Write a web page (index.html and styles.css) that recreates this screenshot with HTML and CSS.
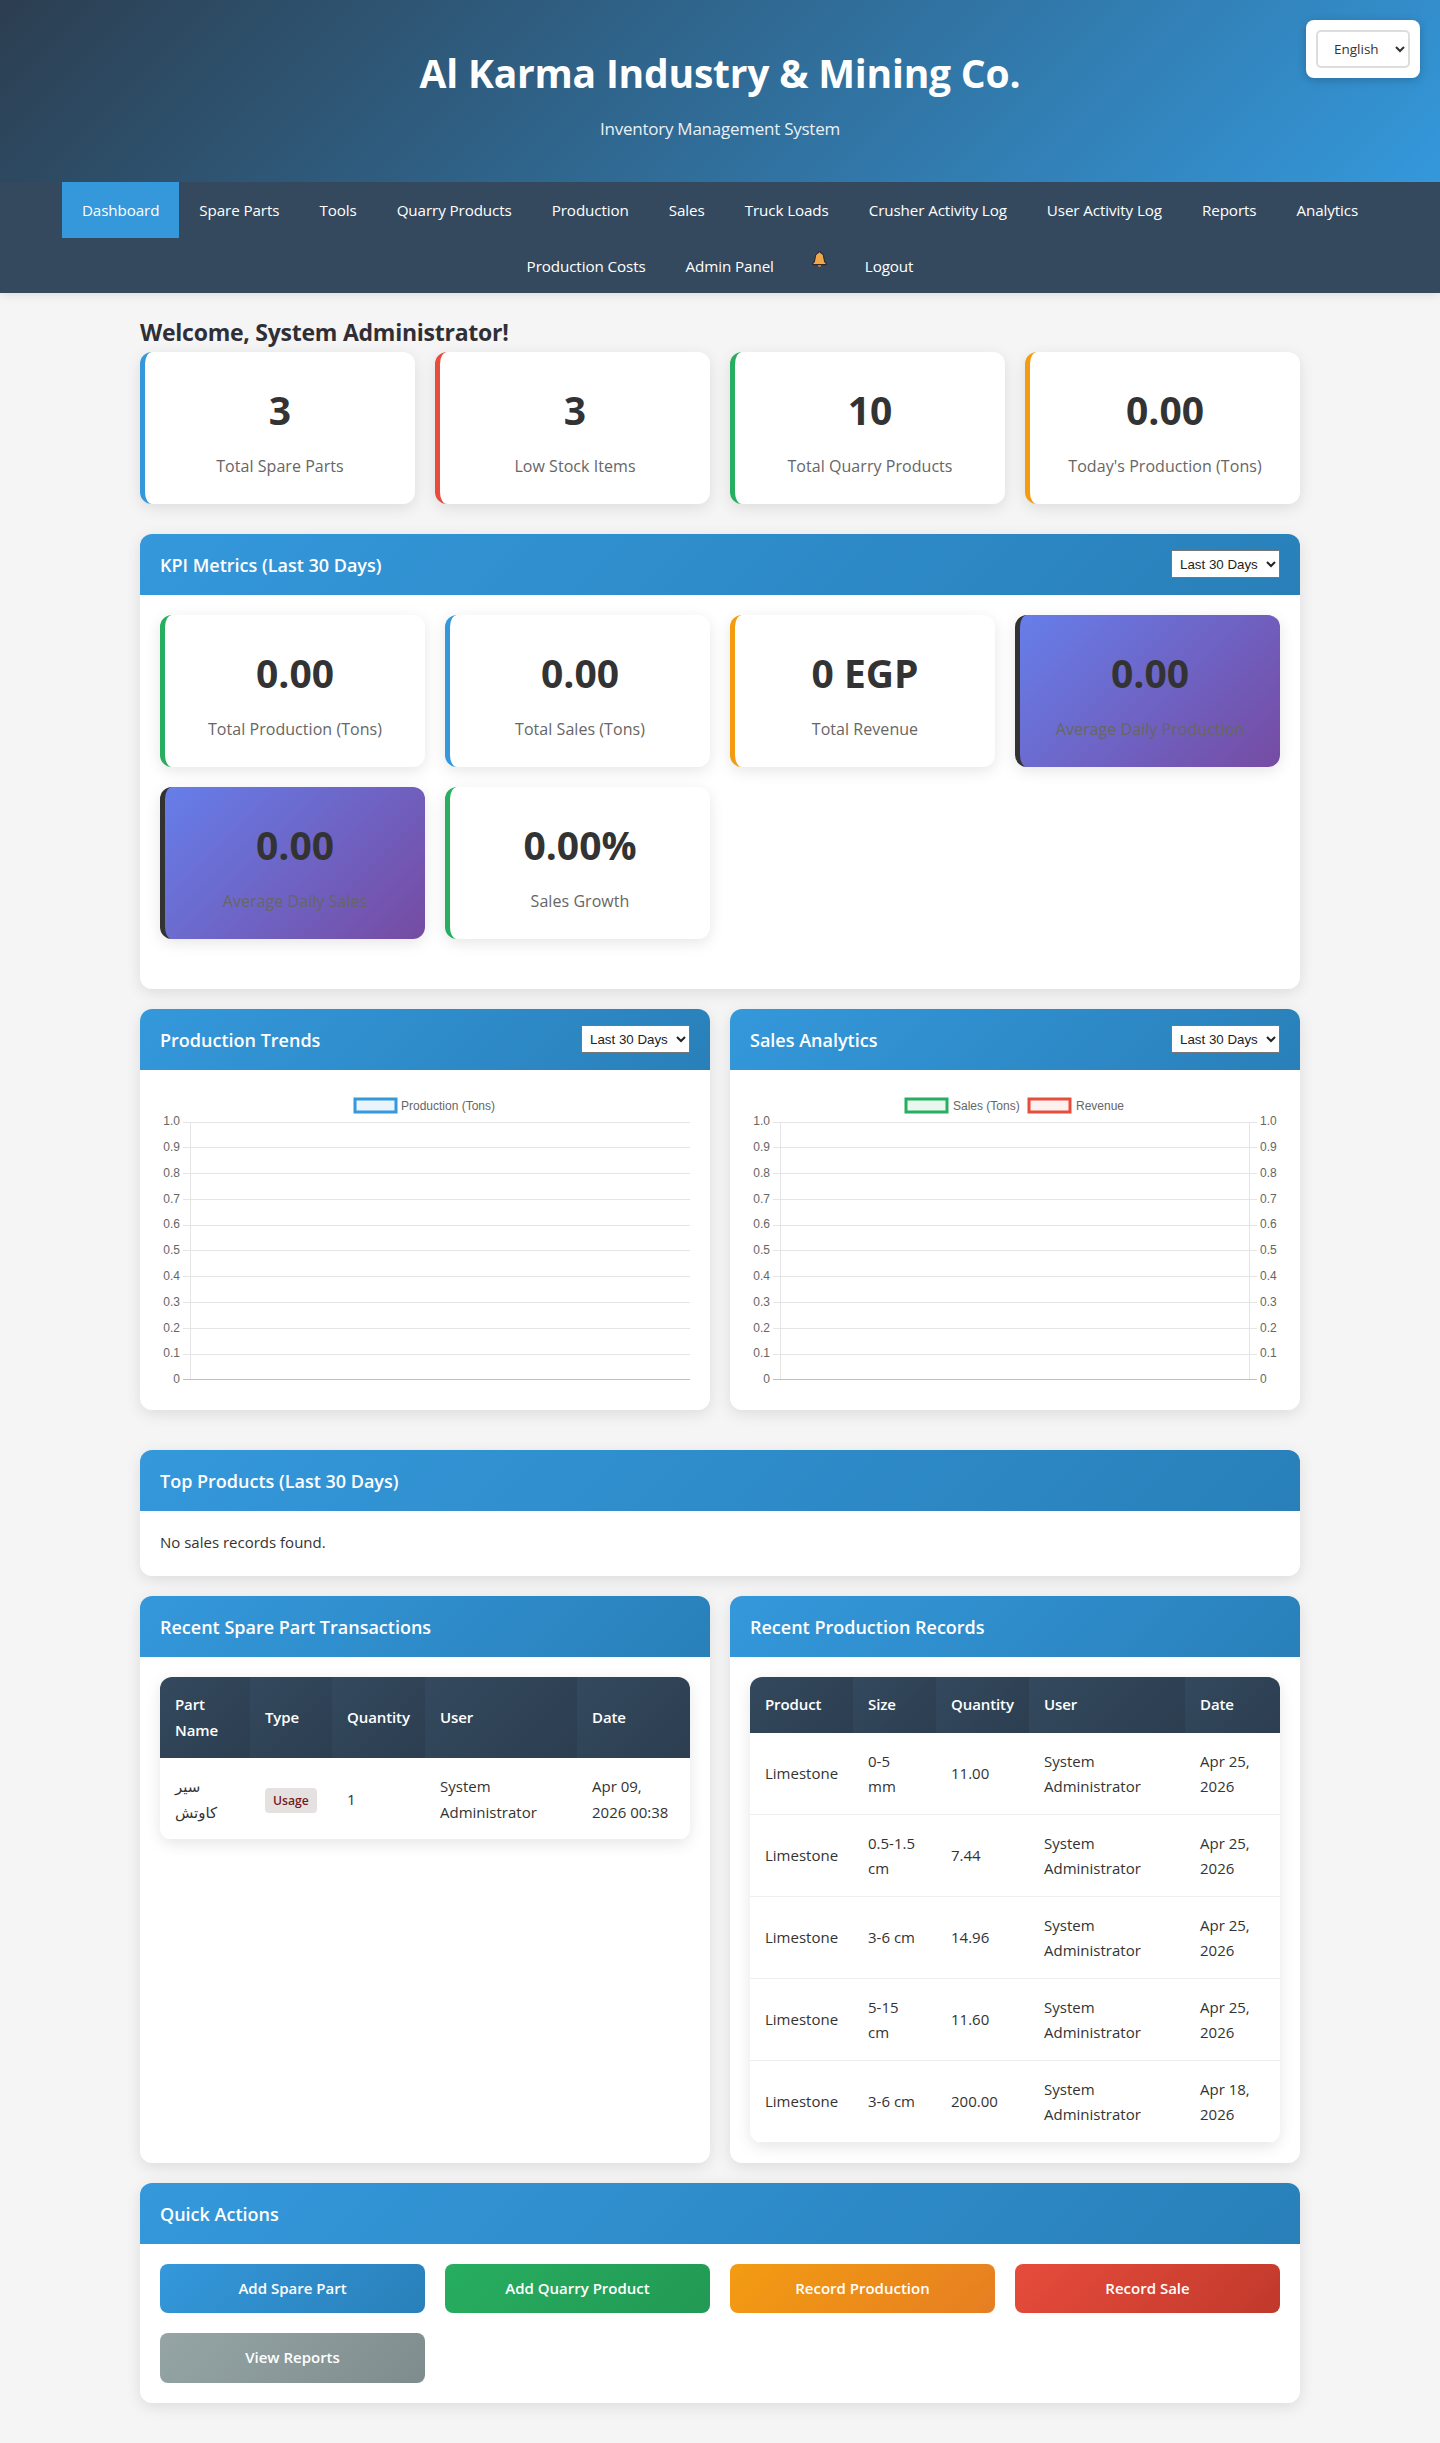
FILE: index.html
```html
<!DOCTYPE html>
<html lang="en">
<head>
    <meta charset="UTF-8">
    <meta name="viewport" content="width=device-width, initial-scale=1.0">
    <title>Al Karma Industry &amp; Mining Co.</title>
    <link rel="stylesheet" href="styles.css">
</head>
<body>
    <header class="site-header">
        <h1>Al Karma Industry &amp; Mining Co.</h1>
        <p>Inventory Management System</p>
        <div class="lang-box">
            <select class="lang-select">
                <option>English</option>
            </select>
        </div>
    </header>

    <nav class="main-nav">
        <a class="active" href="#">Dashboard</a>
        <a href="#">Spare Parts</a>
        <a href="#">Tools</a>
        <a href="#">Quarry Products</a>
        <a href="#">Production</a>
        <a href="#">Sales</a>
        <a href="#">Truck Loads</a>
        <a href="#">Crusher Activity Log</a>
        <a href="#">User Activity Log</a>
        <a href="#">Reports</a>
        <a href="#">Analytics</a>
        <a href="#">Production Costs</a>
        <a href="#">Admin Panel</a>
        <a class="bell-link" href="#">
            <svg class="bell" viewBox="0 0 14 16" width="15" height="17">
                <path d="M7 .6c.7 0 1 .4 1.1 1C10.300 2.200 11 4 11.100 6.500c.1 2.400.7 4 2.300 5.400.3.300.1.900-.4.900H1c-.5 0-.7-.6-.4-.9 1.600-1.400 2.200-3 2.300-5.400C3 4 3.700 2.200 5.900 1.600c.1-.6.400-1 1.100-1z" fill="#f0a64a" stroke="#2a2a33" stroke-width="1"/>
                <path d="M5.500 13.200h3c0 1.200-.6 2.100-1.500 2.100s-1.500-.9-1.500-2.100z" fill="#c8742a"/>
            </svg>
        </a>
        <a href="#">Logout</a>
    </nav>

    <main class="container">
        <h2 class="welcome">Welcome, System Administrator!</h2>

        <div class="card-grid stats">
            <div class="stat-card blue">
                <div class="stat-value">3</div>
                <div class="stat-label">Total Spare Parts</div>
            </div>
            <div class="stat-card red">
                <div class="stat-value">3</div>
                <div class="stat-label">Low Stock Items</div>
            </div>
            <div class="stat-card green">
                <div class="stat-value">10</div>
                <div class="stat-label">Total Quarry Products</div>
            </div>
            <div class="stat-card orange">
                <div class="stat-value">0.00</div>
                <div class="stat-label">Today's Production (Tons)</div>
            </div>
        </div>

        <section class="panel">
            <div class="panel-header">
                <h3>KPI Metrics (Last 30 Days)</h3>
                <select class="period-select"><option>Last 30 Days</option></select>
            </div>
            <div class="panel-body">
                <div class="card-grid kpis">
                    <div class="stat-card green">
                        <div class="stat-value">0.00</div>
                        <div class="stat-label">Total Production (Tons)</div>
                    </div>
                    <div class="stat-card blue">
                        <div class="stat-value">0.00</div>
                        <div class="stat-label">Total Sales (Tons)</div>
                    </div>
                    <div class="stat-card orange">
                        <div class="stat-value">0 EGP</div>
                        <div class="stat-label">Total Revenue</div>
                    </div>
                    <div class="stat-card purple">
                        <div class="stat-value">0.00</div>
                        <div class="stat-label">Average Daily Production</div>
                    </div>
                    <div class="stat-card purple">
                        <div class="stat-value">0.00</div>
                        <div class="stat-label">Average Daily Sales</div>
                    </div>
                    <div class="stat-card green">
                        <div class="stat-value">0.00%</div>
                        <div class="stat-label">Sales Growth</div>
                    </div>
                </div>
            </div>
        </section>

        <div class="two-col charts">
            <section class="panel">
                <div class="panel-header">
                    <h3>Production Trends</h3>
                    <select class="period-select"><option>Last 30 Days</option></select>
                </div>
                <div class="panel-body">
                    <svg class="chart" viewBox="0 0 530 300" width="530" height="300">
                        <rect class="legend-box" x="195" y="9" width="41" height="13" fill="#e9f4fb" stroke="#3498db"/>
                        <text class="legend-text" x="241" y="20">Production (Tons)</text>
                        <g class="grid">
                            <path d="M23 32.500H530M23 57.500H530M23 83.500H530M23 109.500H530M23 135.500H530M23 160.500H530M23 186.500H530M23 212.500H530M23 238.500H530M23 264.500H530"/>
                            <path d="M30.500 32V289"/>
                        </g>
                        <path class="zero-line" d="M23 289.500H530"/>
                        <g class="ticks left">
                            <text x="20" y="35">1.0</text>
                            <text x="20" y="61">0.9</text>
                            <text x="20" y="87">0.8</text>
                            <text x="20" y="113">0.7</text>
                            <text x="20" y="138">0.6</text>
                            <text x="20" y="164">0.5</text>
                            <text x="20" y="190">0.4</text>
                            <text x="20" y="216">0.3</text>
                            <text x="20" y="242">0.2</text>
                            <text x="20" y="267">0.1</text>
                            <text x="20" y="293">0</text>
                        </g>
                    </svg>
                </div>
            </section>

            <section class="panel">
                <div class="panel-header">
                    <h3>Sales Analytics</h3>
                    <select class="period-select"><option>Last 30 Days</option></select>
                </div>
                <div class="panel-body">
                    <svg class="chart" viewBox="0 0 530 300" width="530" height="300">
                        <rect class="legend-box" x="156" y="9" width="41" height="13" fill="#e9f7ef" stroke="#27ae60"/>
                        <text class="legend-text" x="203" y="20">Sales (Tons)</text>
                        <rect class="legend-box" x="279" y="9" width="41" height="13" fill="#fdf1ef" stroke="#e74c3c"/>
                        <text class="legend-text" x="326" y="20">Revenue</text>
                        <g class="grid">
                            <path d="M23 32.500H507M23 57.500H507M23 83.500H507M23 109.500H507M23 135.500H507M23 160.500H507M23 186.500H507M23 212.500H507M23 238.500H507M23 264.500H507"/>
                            <path d="M30.500 32V289M499.500 32V289"/>
                        </g>
                        <path class="zero-line" d="M23 289.500H507"/>
                        <g class="ticks left">
                            <text x="20" y="35">1.0</text>
                            <text x="20" y="61">0.9</text>
                            <text x="20" y="87">0.8</text>
                            <text x="20" y="113">0.7</text>
                            <text x="20" y="138">0.6</text>
                            <text x="20" y="164">0.5</text>
                            <text x="20" y="190">0.4</text>
                            <text x="20" y="216">0.3</text>
                            <text x="20" y="242">0.2</text>
                            <text x="20" y="267">0.1</text>
                            <text x="20" y="293">0</text>
                        </g>
                        <g class="ticks right">
                            <text x="510" y="35">1.0</text>
                            <text x="510" y="61">0.9</text>
                            <text x="510" y="87">0.8</text>
                            <text x="510" y="113">0.7</text>
                            <text x="510" y="138">0.6</text>
                            <text x="510" y="164">0.5</text>
                            <text x="510" y="190">0.4</text>
                            <text x="510" y="216">0.3</text>
                            <text x="510" y="242">0.2</text>
                            <text x="510" y="267">0.1</text>
                            <text x="510" y="293">0</text>
                        </g>
                    </svg>
                </div>
            </section>
        </div>

        <section class="panel">
            <div class="panel-header">
                <h3>Top Products (Last 30 Days)</h3>
            </div>
            <div class="panel-body">
                <p class="empty">No sales records found.</p>
            </div>
        </section>

        <div class="two-col">
            <section class="panel">
                <div class="panel-header">
                    <h3>Recent Spare Part Transactions</h3>
                </div>
                <div class="panel-body">
                    <table class="data-table">
                        <colgroup>
                            <col class="w-90"><col class="w-82"><col class="w-93"><col class="w-152"><col>
                        </colgroup>
                        <thead>
                            <tr><th>Part Name</th><th>Type</th><th>Quantity</th><th>User</th><th>Date</th></tr>
                        </thead>
                        <tbody>
                            <tr>
                                <td>سير كاوتش</td>
                                <td><span class="badge">Usage</span></td>
                                <td>1</td>
                                <td>System Administrator</td>
                                <td>Apr 09, 2026 00:38</td>
                            </tr>
                        </tbody>
                    </table>
                </div>
            </section>

            <section class="panel">
                <div class="panel-header">
                    <h3>Recent Production Records</h3>
                </div>
                <div class="panel-body">
                    <table class="data-table">
                        <colgroup>
                            <col class="w-103"><col class="w-83"><col class="w-93"><col class="w-156"><col>
                        </colgroup>
                        <thead>
                            <tr><th>Product</th><th>Size</th><th>Quantity</th><th>User</th><th>Date</th></tr>
                        </thead>
                        <tbody>
                            <tr><td>Limestone</td><td>0-5 mm</td><td>11.00</td><td>System Administrator</td><td>Apr 25, 2026</td></tr>
                            <tr><td>Limestone</td><td>0.5-1.5 cm</td><td>7.44</td><td>System Administrator</td><td>Apr 25, 2026</td></tr>
                            <tr><td>Limestone</td><td>3-6 cm</td><td>14.96</td><td>System Administrator</td><td>Apr 25, 2026</td></tr>
                            <tr><td>Limestone</td><td>5-15 cm</td><td>11.60</td><td>System Administrator</td><td>Apr 25, 2026</td></tr>
                            <tr><td>Limestone</td><td>3-6 cm</td><td>200.00</td><td>System Administrator</td><td>Apr 18, 2026</td></tr>
                        </tbody>
                    </table>
                </div>
            </section>
        </div>

        <section class="panel">
            <div class="panel-header">
                <h3>Quick Actions</h3>
            </div>
            <div class="panel-body">
                <div class="card-grid actions">
                    <a class="btn btn-blue" href="#">Add Spare Part</a>
                    <a class="btn btn-green" href="#">Add Quarry Product</a>
                    <a class="btn btn-orange" href="#">Record Production</a>
                    <a class="btn btn-red" href="#">Record Sale</a>
                    <a class="btn btn-gray" href="#">View Reports</a>
                </div>
            </div>
        </section>
    </main>
</body>
</html>
```

FILE: styles.css
```css
* {
    box-sizing: border-box;
}

body {
    margin: 0;
    font-family: 'Open Sans', 'DejaVu Sans', sans-serif;
    font-size: 15px;
    line-height: 1.7;
    background: #f5f5f5;
    color: #333;
}

.site-header {
    position: relative;
    height: 182px;
    padding-top: 40px;
    text-align: center;
    color: #fff;
    background: linear-gradient(135deg, #2c3e50, #3498db);
}

.site-header h1 {
    margin: 0 0 8px;
    font-size: 39px;
    line-height: 66px;
    font-weight: 700;
    letter-spacing: -0.2px;
}

.site-header p {
    margin: 0;
    font-size: 17px;
    line-height: 30px;
    letter-spacing: -0.25px;
    opacity: 0.9;
}

.lang-box {
    position: absolute;
    top: 20px;
    right: 20px;
    padding: 10px;
    background: #fff;
    border-radius: 8px;
    box-shadow: 0 2px 10px rgba(0, 0, 0, 0.2);
}

.lang-select {
    display: block;
    width: 94px;
    height: 38px;
    padding: 0 12px;
    font-family: 'Open Sans', sans-serif;
    font-size: 13.500px;
    color: #333;
    background: #fff;
    border: 2px solid #ddd;
    border-radius: 5px;
}

.main-nav {
    display: flex;
    flex-wrap: wrap;
    justify-content: center;
    background: #34495e;
    box-shadow: 0 2px 10px rgba(0, 0, 0, 0.1);
}

.main-nav a {
    padding: 15px 20px;
    height: 55.500px;
    font-size: 15.200px;
    line-height: 26px;
    letter-spacing: -0.1px;
    color: #fff;
    text-decoration: none;
}

.main-nav a.active {
    background: #3498db;
}

.main-nav .bell-link {
    width: 51px;
    padding: 13px 0 0 18px;
}

.bell {
    display: block;
}

.container {
    padding: 20px 140px 40px;
}

.welcome {
    margin: 0;
    font-size: 23px;
    line-height: 39px;
    font-weight: 700;
    letter-spacing: -0.25px;
    color: #2f2f35;
}

.card-grid {
    display: grid;
    grid-template-columns: repeat(4, 1fr);
    gap: 20px;
}

.stats,
.kpis {
    margin-bottom: 30px;
}

.stat-card {
    padding: 25px 20px;
    text-align: center;
    background: #fff;
    border-left: 5px solid #3498db;
    border-radius: 12px;
    box-shadow: 0 4px 15px rgba(0, 0, 0, 0.1);
}

.stat-card.red {
    border-left-color: #e74c3c;
}

.stat-card.green {
    border-left-color: #27ae60;
}

.stat-card.orange {
    border-left-color: #f39c12;
}

.stat-card.purple {
    background: linear-gradient(135deg, #667eea, #764ba2);
    border-left-color: #333;
}

.stat-value {
    margin-bottom: 10px;
    font-size: 39px;
    line-height: 66px;
    font-weight: 700;
    color: #333;
}

.stat-label {
    font-size: 16px;
    line-height: 26px;
    letter-spacing: 0.05px;
    color: #666;
}

.panel {
    margin-bottom: 20px;
    background: #fff;
    border-radius: 12px;
    box-shadow: 0 4px 15px rgba(0, 0, 0, 0.1);
    overflow: hidden;
}

.panel-header {
    display: flex;
    justify-content: space-between;
    align-items: flex-start;
    height: 61px;
    padding: 16px 20px;
    color: #fff;
    background: linear-gradient(135deg, #3498db, #2980b9);
}

.panel-header h3 {
    margin: 1px 0 0;
    font-size: 18px;
    line-height: 29px;
    font-weight: 600;
}

.period-select {
    width: 109px;
    height: 28px;
    padding: 0 0 0 4px;
    font-family: 'Liberation Sans', Arial, sans-serif;
    font-size: 13.330px;
    color: #222;
    background: #fff;
    border: 1px solid #767676;
    border-radius: 0;
}

.panel-body {
    padding: 20px;
}

.two-col {
    display: grid;
    grid-template-columns: 1fr 1fr;
    gap: 20px;
}

.charts {
    margin-bottom: 20px;
}

.chart {
    display: block;
    font-family: 'Liberation Sans', Arial, sans-serif;
    font-size: 12px;
}

.legend-box {
    stroke-width: 3;
}

.legend-text {
    fill: #666;
}

.grid path {
    fill: none;
    stroke: #e5e5e5;
    stroke-width: 1;
}

.zero-line {
    fill: none;
    stroke: #bfbfbf;
    stroke-width: 1;
}

.ticks text {
    fill: #666;
}

.ticks.left text {
    text-anchor: end;
}

.empty {
    margin: -1px 0 1px;
    font-size: 15px;
    line-height: 25px;
}

.data-table {
    width: 100%;
    table-layout: fixed;
    border-collapse: separate;
    border-spacing: 0;
    border-radius: 12px;
    overflow: hidden;
    box-shadow: 0 4px 15px rgba(0, 0, 0, 0.1);
}

.w-90 { width: 90px; }
.w-82 { width: 82px; }
.w-83 { width: 83px; }
.w-93 { width: 93px; }
.w-103 { width: 103px; }
.w-152 { width: 152px; }
.w-156 { width: 156px; }

.data-table th {
    padding: 15px;
    font-size: 15px;
    line-height: 25.500px;
    font-weight: 600;
    letter-spacing: -0.1px;
    text-align: left;
    color: #fff;
    background: linear-gradient(135deg, #34495e, #2c3e50);
}

.data-table td {
    padding: 16px 15px 14px;
    font-size: 15px;
    line-height: 25.500px;
    color: #333;
    border-bottom: 1px solid #eee;
}

.badge {
    display: inline-block;
    padding: 0 8px;
    font-size: 12.200px;
    line-height: 25px;
    font-weight: 600;
    color: #721c24;
    background: #e6e1e1;
    border-radius: 4px;
    vertical-align: middle;
}

.btn {
    display: block;
    padding: 12px;
    font-size: 15px;
    line-height: 25.500px;
    font-weight: 600;
    text-align: center;
    color: #fff;
    text-decoration: none;
    border-radius: 8px;
}

.btn-blue {
    background: linear-gradient(135deg, #3498db, #2980b9);
}

.btn-green {
    background: linear-gradient(135deg, #27ae60, #229954);
}

.btn-orange {
    background: linear-gradient(135deg, #f39c12, #e67e22);
}

.btn-red {
    background: linear-gradient(135deg, #e74c3c, #c0392b);
}

.btn-gray {
    background: linear-gradient(135deg, #95a5a6, #7f8c8d);
}
```
